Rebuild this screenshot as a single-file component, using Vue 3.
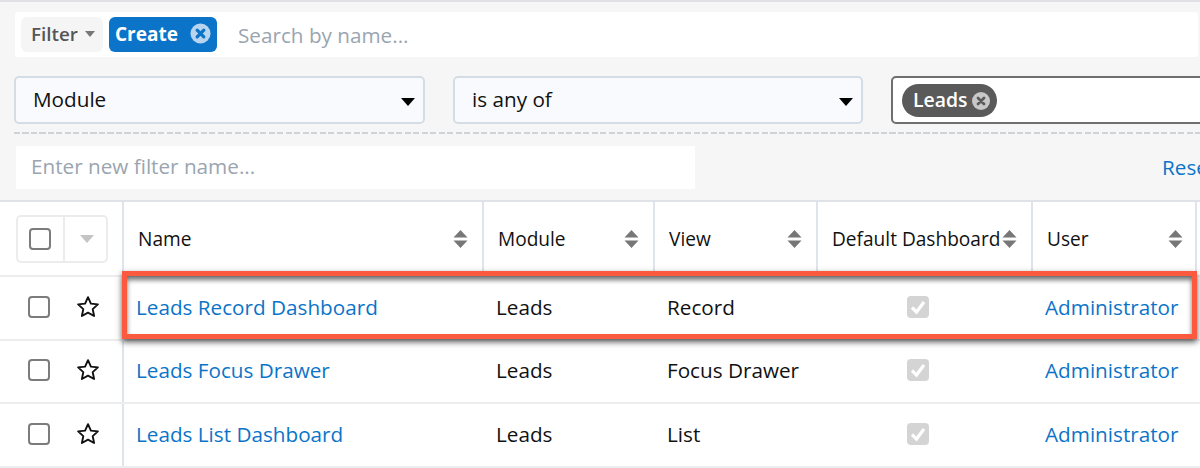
<script setup>
const columns = [
  { label: 'Name', cls: 'c-name' },
  { label: 'Module', cls: 'c-module' },
  { label: 'View', cls: 'c-view' },
  { label: 'Default Dashboard', cls: 'c-default' },
  { label: 'User', cls: 'c-user' }
]
const rows = [
  { name: 'Leads Record Dashboard', module: 'Leads', view: 'Record', user: 'Administrator' },
  { name: 'Leads Focus Drawer', module: 'Leads', view: 'Focus Drawer', user: 'Administrator' },
  { name: 'Leads List Dashboard', module: 'Leads', view: 'List', user: 'Administrator' }
]
</script>

<template>
  <div class="page">
    <section class="panel">
      <div class="search">
        <button class="filter-btn">Filter <i class="caret-small"></i></button>
        <span class="create-pill">Create
          <svg class="x-circle" viewBox="0 0 22 22"><circle cx="11" cy="11" r="10.5" fill="#b9d4ee"/><path d="M7.5 7.5l7 7M14.5 7.5l-7 7" stroke="#0b74c8" stroke-width="3.4" stroke-linecap="round"/></svg>
        </span>
        <span class="placeholder search-text">Search by name...</span>
      </div>
      <div class="selects">
        <div class="select s1">Module<i class="caret"></i></div>
        <div class="select s2">is any of<i class="caret"></i></div>
        <div class="multi">
          <span class="leads-pill">Leads
            <svg class="x-small" viewBox="0 0 18 18"><circle cx="9" cy="9" r="9" fill="#c8c8c8"/><path d="M6 6l6 6M12 6l-6 6" stroke="#5a5a5a" stroke-width="2.8" stroke-linecap="round"/></svg>
          </span>
        </div>
      </div>
      <div class="dashed"></div>
      <div class="name-row">
        <div class="name-input placeholder">Enter new filter name...</div>
        <a class="reset">Reset</a>
      </div>
    </section>

    <section class="table">
      <div class="row head">
        <div class="lead-cell head-lead">
          <div class="group">
            <span class="g-left"><i class="check"></i></span>
            <span class="g-right"><i class="caret-grey"></i></span>
          </div>
        </div>
        <div v-for="c in columns" :key="c.label" class="th" :class="c.cls">
          <span>{{ c.label }}</span>
          <svg class="sort" viewBox="0 0 14 18"><path d="M7 0l7 7.6H0zM0 10.4h14L7 18z" fill="#777"/></svg>
        </div>
      </div>
      <div v-for="r in rows" :key="r.name" class="row body">
        <div class="lead-cell">
          <i class="check"></i>
          <svg class="star" viewBox="0 0 24 24"><path d="M12 2.2l2.9 6.4 7 .8-5.2 4.7 1.4 6.9L12 17.6l-6.1 3.4 1.4-6.9L2.100 9.400l7-.8z" fill="#fff" stroke="#111" stroke-width="1.9" stroke-linejoin="round"/></svg>
        </div>
        <div class="td c-name"><a>{{ r.name }}</a></div>
        <div class="td c-module">{{ r.module }}</div>
        <div class="td c-view">{{ r.view }}</div>
        <div class="td c-default">
          <span class="disabled-check"><svg viewBox="0 0 22 22"><path d="M5 11.500l4.500 4.500 7.500-10" fill="none" stroke="#fff" stroke-width="3.200"/></svg></span>
        </div>
        <div class="td c-user"><a>{{ r.user }}</a></div>
      </div>
      <div class="highlight"></div>
    </section>
  </div>
</template>

<style>
html, body { margin: 0; background: #fff; }
</style>

<style scoped>
.page {
  position: relative;
  width: 1200px;
  height: 468px;
  overflow: hidden;
  background: #fff;
  color: #111;
  font-family: "Open Sans", "Liberation Sans", sans-serif;
  font-size: 20.7px;
}
.panel {
  height: 200px;
  box-sizing: border-box;
  border-top: 2px solid #dfe1e5;
  background: #f6f6f6;
  padding-top: 10px;
}
.search {
  display: flex;
  align-items: center;
  width: 1183px;
  height: 45px;
  margin-left: 15px;
  box-sizing: border-box;
  padding-left: 6px;
  background: #fff;
  border-radius: 3px;
}
.filter-btn {
  display: flex;
  align-items: center;
  gap: 7px;
  width: 82px;
  height: 35px;
  padding: 0 0 2px 10px;
  box-sizing: border-box;
  border: 0;
  border-radius: 6px;
  background: #f5f5f5;
  color: #555;
  font: 600 18.800px "Open Sans", sans-serif;
}
.caret-small {
  width: 0; height: 0;
  border-left: 5.500px solid transparent;
  border-right: 5.500px solid transparent;
  border-top: 6px solid #777;
}
.create-pill {
  display: flex;
  align-items: center;
  justify-content: space-between;
  width: 108px;
  height: 35px;
  margin-left: 6px;
  padding: 0 6px 2px 6px;
  box-sizing: border-box;
  border-radius: 6px;
  background: #0b74c8;
  color: #fff;
  font-weight: 700;
  font-size: 19px;
}
.x-circle { width: 21px; height: 21px; }
.placeholder { color: #9aa5b0; }
.search-text { margin-left: 21px; }
.selects {
  display: flex;
  margin: 19px 0 0 14px;
  height: 48px;
}
.select {
  position: relative;
  flex: none;
  display: flex;
  align-items: center;
  height: 48px;
  box-sizing: border-box;
  padding: 0 0 2px 17px;
  background: #f8fafd;
  border: 2px solid #d4dde6;
  border-radius: 5px;
  color: #111;
}
.s1 { width: 411px; }
.s2 { width: 410px; margin-left: 28px; }
.caret {
  position: absolute;
  right: 8px;
  top: 20px;
  width: 0; height: 0;
  border-left: 7.500px solid transparent;
  border-right: 7.500px solid transparent;
  border-top: 8px solid #000;
}
.multi {
  flex: none;
  width: 400px;
  height: 48px;
  margin-left: 28px;
  box-sizing: border-box;
  padding: 6px 0 0 9px;
  background: #fff;
  border: 2px solid #6f6f6f;
  border-radius: 5px;
}
.leads-pill {
  display: inline-flex;
  align-items: center;
  width: 95px;
  height: 33px;
  box-sizing: border-box;
  padding: 0 0 3px 11px;
  gap: 5px;
  border-radius: 17px;
  background: #5a5a5a;
  color: #fff;
  font-weight: 600;
  font-size: 19.400px;
}
.x-small { width: 18px; height: 18px; margin-top: 3px; }
.dashed {
  margin: 8px 0 0 14px;
  height: 1.500px;
  background: repeating-linear-gradient(90deg, #d0d3d6 0 6px, transparent 6px 8.500px);
}
.name-row {
  display: flex;
  align-items: center;
  justify-content: space-between;
  margin-top: 12px;
  margin-left: 16px;
}
.name-input {
  width: 679px;
  height: 43px;
  box-sizing: border-box;
  padding-left: 15px;
  line-height: 41px;
  background: #fff;
}
.reset {
  width: 38px;
  white-space: nowrap;
  color: #0b74c8;
}
.table {
  position: relative;
  border-top: 2px solid #dfe3e8;
  background: #fff;
}
.row {
  display: grid;
  grid-template-columns: 124px 358px 171px 163px 215px 166px;
  box-sizing: border-box;
  border-bottom: 2px solid #ebedef;
}
.head { height: 75px; }
.body { height: 63.500px; }
.lead-cell {
  display: flex;
  align-items: center;
  box-sizing: border-box;
  padding-left: 28px;
  padding-bottom: 2px;
  border-right: 2px solid #dfe4ea;
}
.head-lead { padding-left: 16px; padding-bottom: 0; }
.group { display: flex; height: 48px; }
.g-left, .g-right {
  display: flex;
  align-items: center;
  justify-content: center;
  box-sizing: border-box;
  border: 2px solid #ececec;
  border-radius: 5px 0 0 5px;
}
.g-left { width: 49px; padding-right: 2px; }
.g-right { width: 43px; padding-left: 3px; border-left: 0; border-radius: 0 5px 5px 0; }
.check {
  display: block;
  flex: none;
  width: 22px;
  height: 22px;
  box-sizing: border-box;
  border: 2px solid #7c7c7c;
  border-radius: 4px;
  background: #fff;
}
.caret-grey {
  width: 0; height: 0;
  border-left: 7px solid transparent;
  border-right: 7px solid transparent;
  border-top: 8px solid #c4c4c4;
}
.star { width: 24px; height: 24px; margin-left: 26px; flex: none; }
.th {
  display: flex;
  align-items: center;
  justify-content: space-between;
  box-sizing: border-box;
  padding: 0 14px;
  border-left: 2px solid #dfe4ea;
  font-size: 19.100px;
  white-space: nowrap;
}
.th.c-name { border-left: 0; }
.th.c-user { border-right: 2px solid #dfe4ea; padding-right: 12px; }
.sort { width: 15px; height: 18px; flex: none; margin-top: 1px; }
.td {
  display: flex;
  align-items: center;
  box-sizing: border-box;
  padding-left: 14px;
  padding-bottom: 2px;
}
.td.c-name { padding-left: 12px; }
.td.c-default { justify-content: center; padding: 0 11px 2px 0; }
.td a { color: #0b74c8; white-space: nowrap; }
.disabled-check {
  display: block;
  width: 22px;
  height: 22px;
  border-radius: 4px;
  background: #d4d4d4;
}
.disabled-check svg { display: block; }
.highlight {
  position: absolute;
  left: 122px;
  top: 69px;
  width: 1075px;
  height: 68px;
  box-sizing: border-box;
  border: 5px solid #fc5a3e;
  box-shadow: 0 3px 6px rgba(0,0,0,.65), inset 0 4px 5px rgba(0,0,0,.55);
}
</style>
